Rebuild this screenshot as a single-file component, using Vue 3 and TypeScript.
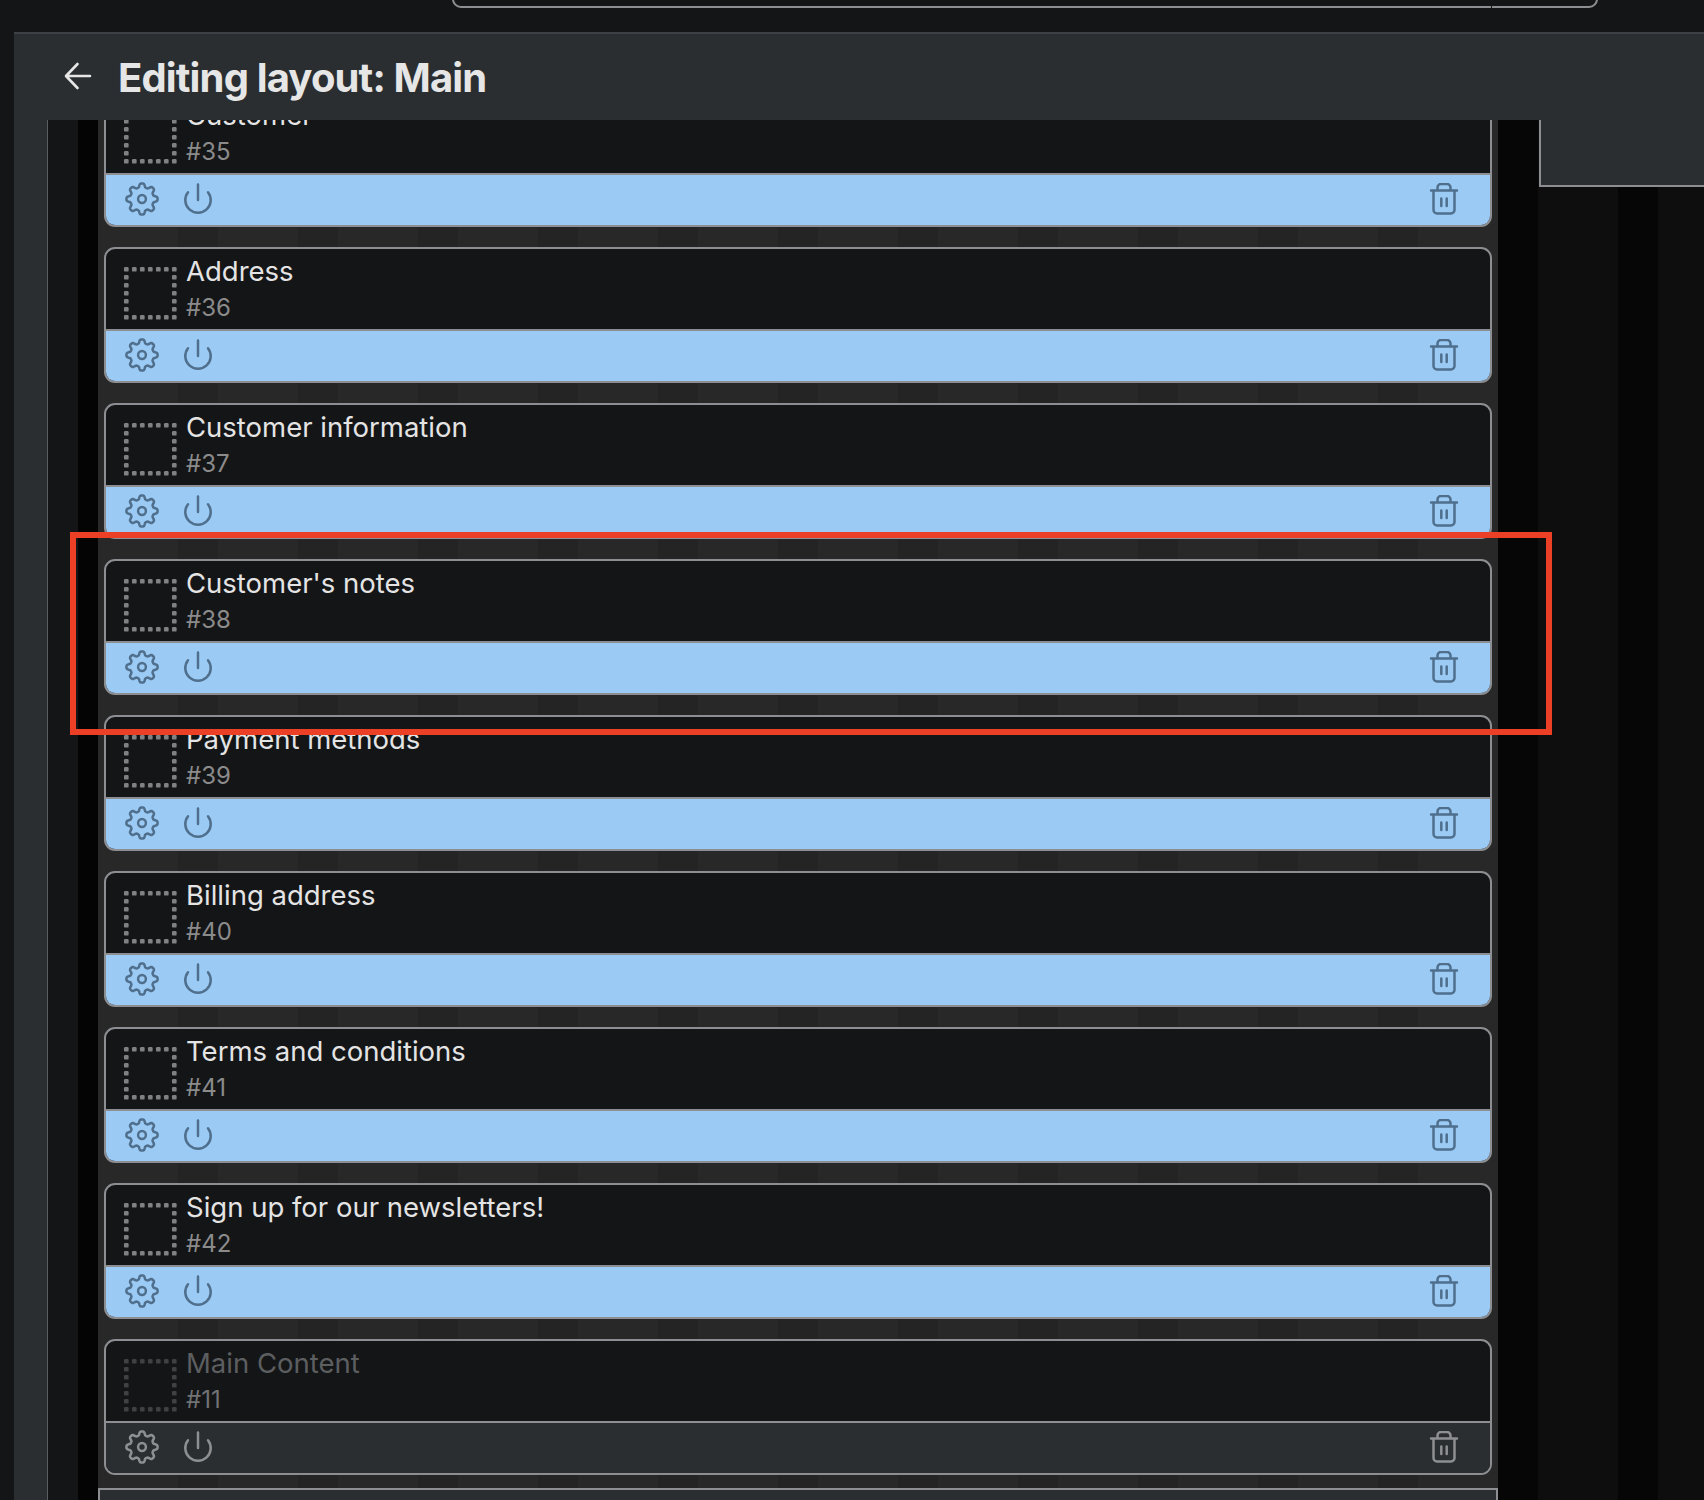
<template>
  <div class="page">
    <div class="topbar">
      <div class="search"><span class="tick"></span></div>
    </div>

    <header class="head">
      <svg class="back" width="28" height="28" viewBox="0 0 28 28">
        <path d="M26 14H2.5M13.5 2 2 14l11.5 12" />
      </svg>
      <h1>Editing layout: Main</h1>
    </header>

    <div class="body">
      <div class="rail"></div>
      <div class="well"></div>
      <div class="edge"></div>

      <main class="panel">
        <div class="list">
          <article
            v-for="block in blocks"
            :key="block.id"
            class="block"
            :class="{ off: block.off }"
          >
            <div class="block-info">
              <svg class="dots" width="54" height="54" viewBox="0 0 54 54">
                <rect v-for="(d, i) in dots" :key="i" :x="d.x" :y="d.y" width="4.6" height="4.6" rx="1.2" />
              </svg>
              <div class="block-text">
                <div class="name">{{ block.name }}</div>
                <div class="num">#{{ block.id }}</div>
              </div>
            </div>
            <div class="block-foot">
              <svg class="ico gear" width="36" height="36" viewBox="0 0 36 36">
                <path :d="gearPath" />
                <circle cx="18" cy="18" r="3.9" />
              </svg>
              <svg class="ico power" width="30" height="32" viewBox="0 0 30 32">
                <path d="M15 1.5V17M5 9.2a12.7 12.7 0 1 0 20 0" />
              </svg>
              <svg class="ico trash" width="30" height="32" viewBox="0 0 30 32">
                <path d="M2 7.5h26M8.5 7V4.5A3.5 3.5 0 0 1 12 1h6a3.5 3.5 0 0 1 3.5 3.5V7M4.5 8v19A3.5 3.5 0 0 0 8 30.5h14a3.5 3.5 0 0 0 3.5-3.5V8M12.3 15.5V23M17.7 15.5V23" />
              </svg>
            </div>
          </article>
        </div>
        <div class="next-section"></div>
      </main>

      <aside class="side">
        <div class="side-gap"></div>
        <div class="side-card"></div>
      </aside>
    </div>

    <div class="callout"></div>
  </div>
</template>

<script setup lang="ts">
interface Block {
  id: number
  name: string
  off?: boolean
}

const blocks: Block[] = [
  { id: 35, name: 'Customer' },
  { id: 36, name: 'Address' },
  { id: 37, name: 'Customer information' },
  { id: 38, name: "Customer's notes" },
  { id: 39, name: 'Payment methods' },
  { id: 40, name: 'Billing address' },
  { id: 41, name: 'Terms and conditions' },
  { id: 42, name: 'Sign up for our newsletters!' },
  { id: 11, name: 'Main Content', off: true },
]

// 7 dots a side, 8px apart
const dots: { x: number; y: number }[] = []
for (let i = 0; i < 7; i++) {
  for (let j = 0; j < 7; j++) {
    if (i === 0 || j === 0 || i === 6 || j === 6) dots.push({ x: 1 + i * 8, y: 1 + j * 8 })
  }
}

// eight rounded teeth, one pointing straight up
const gearPoints: string[] = []
for (let k = 0; k < 160; k++) {
  const a = (k / 160) * Math.PI * 2
  const wave = Math.tanh(1.8 * Math.cos(8 * a)) / Math.tanh(1.8)
  const r = 13.7 + 1.9 * wave
  const x = 18 + r * Math.sin(a)
  const y = 18 - r * Math.cos(a)
  gearPoints.push(`${x.toFixed(2)} ${y.toFixed(2)}`)
}
const gearPath = `M${gearPoints.join('L')}Z`
</script>

<style scoped>
.page {
  position: relative;
  width: 1704px;
  height: 1500px;
  overflow: hidden;
  background: #141517;
  font-family: Inter, "Liberation Sans", sans-serif;
}

.topbar {
  height: 32px;
  padding-left: 452px;
  overflow: hidden;
  box-sizing: border-box;
}
.search {
  position: relative;
  width: 1146px;
  height: 18px;
  margin-top: -10px;
  box-sizing: border-box;
  border: 2px solid #8c8e91;
  border-radius: 12px;
}
.tick {
  position: absolute;
  left: 1037px;
  bottom: -2px;
  width: 1px;
  height: 3px;
  background: #141517;
}

.head {
  display: flex;
  align-items: center;
  height: 88px;
  margin-left: 14px;
  padding-left: 50px;
  box-sizing: border-box;
  background: #2a2e31;
  box-shadow: inset 0 2px 0 #3d4145;
}
.back {
  margin-right: 26px;
  fill: none;
  stroke: #e6e6e6;
  stroke-width: 2.6;
  stroke-linecap: round;
  stroke-linejoin: round;
}
h1 {
  margin: 2px 0 0;
  font-size: 40px;
  font-weight: 700;
  letter-spacing: -0.85px;
  color: #e6e6e6;
}

.body {
  display: flex;
  height: 1380px;
  padding-left: 14px;
  overflow: hidden;
}
.rail {
  width: 33px;
  background: #2a2e31;
  border-right: 1px solid #5a5d60;
}
.well {
  width: 30px;
  background: #141517;
}
.edge {
  width: 20px;
  background: #040404;
}

.panel {
  width: 1400px;
  flex: none;
  padding: 0 6px;
  box-sizing: border-box;
  overflow: hidden;
  background: repeating-linear-gradient(90deg, #282828 0 80px, #242424 80px 120px);
}
.list {
  display: flex;
  flex-direction: column;
  gap: 20px;
  margin-top: -29px;
}

.block {
  height: 136px;
  box-sizing: border-box;
  border: 2px solid #8c8e91;
  border-radius: 11px;
  overflow: hidden;
  background: #141517;
}
.block-info {
  display: flex;
  gap: 9px;
  height: 80px;
  padding: 17px 0 0 17px;
  box-sizing: border-box;
}
.dots {
  fill: #7f8183;
  flex: none;
}
.block-text {
  margin-top: -14px;
}
.name {
  font-size: 27.5px;
  line-height: 38px;
  color: #e4e4e4;
}
.num {
  margin-top: 3px;
  font-size: 24px;
  line-height: 30px;
  color: #8b8b8b;
}
.block-foot {
  display: flex;
  align-items: center;
  gap: 23px;
  height: 52px;
  padding: 0 31px 3px 18px;
  box-sizing: border-box;
  border-top: 2px solid #8c8e91;
  background: #9bcbf5;
}
.ico {
  flex: none;
  fill: none;
  stroke: #4f6f8c;
  stroke-width: 2.5;
  stroke-linecap: round;
  stroke-linejoin: round;
}
.trash {
  margin-left: auto;
}

.off .name {
  color: #5c5e60;
}
.off .num {
  color: #707274;
}
.off .dots {
  fill: #3f4143;
}
.off .block-foot {
  background: #2a2e31;
}
.off .ico {
  stroke: #8e8f91;
}

.next-section {
  height: 40px;
  margin: 13px -6px 0;
  box-sizing: border-box;
  border: 2px solid #8c8e91;
  background: #2a2e31;
}

.side {
  display: flex;
  flex: 1;
  align-items: flex-start;
  background: repeating-linear-gradient(90deg, #060606 0 40px, #0e0e0e 40px 120px);
}
.side-gap {
  width: 41px;
  flex: none;
}
.side-card {
  flex: 1;
  height: 67px;
  box-sizing: border-box;
  border-left: 2px solid #8c8e91;
  border-bottom: 2px solid #8c8e91;
  background: #2a2e31;
}

.callout {
  position: absolute;
  left: 70px;
  top: 532px;
  width: 1482px;
  height: 203px;
  box-sizing: border-box;
  border: 6px solid #ec4026;
}
</style>
